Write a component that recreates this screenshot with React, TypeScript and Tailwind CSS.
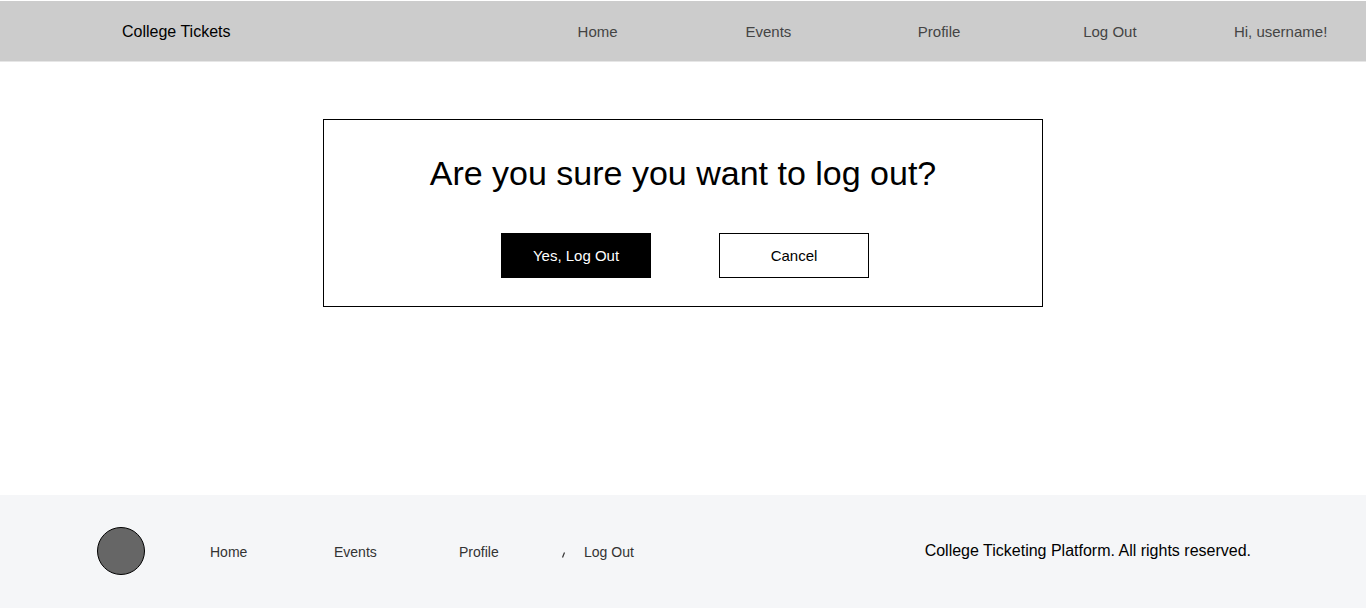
const headerLinks = ["Home", "Events", "Profile", "Log Out"];

function Header() {
  return (
    <header className="grid h-[61px] grid-cols-[3fr_5fr] items-center border-b border-[#e6e6e6] bg-[#cccccc] pt-0.5">
      <a href="#" className="pl-[122px] text-base text-black">
        College Tickets
      </a>
      <nav aria-label="Main" className="grid grid-cols-5 text-center text-[15px] leading-5 text-[#444444]">
        {headerLinks.map((label) => (
          <a key={label} href="#">
            {label}
          </a>
        ))}
        <span>Hi, username!</span>
      </nav>
    </header>
  );
}

function LogoutDialog() {
  return (
    <section
      aria-labelledby="logout-title"
      className="mx-auto w-full max-w-[720px] border border-black px-6 pt-8 pb-7"
    >
      <h1 id="logout-title" className="text-center text-[34px] leading-[42px] text-black">
        Are you sure you want to log out?
      </h1>
      <div className="mt-[39px] flex flex-wrap justify-center gap-x-[68px] gap-y-4 pl-1 text-[15px] leading-5">
        <button type="button" className="h-[45px] w-[150px] border border-black bg-black text-white">
          Yes, Log Out
        </button>
        <button type="button" className="h-[45px] w-[150px] border border-black bg-white text-black">
          Cancel
        </button>
      </div>
    </section>
  );
}

function Footer() {
  return (
    <footer className="flex h-[113px] items-center bg-[#f5f6f8] pr-[115px] pb-0.5 pl-[97px]">
      <div className="size-12 shrink-0 rounded-full border border-black bg-[#666666]" />
      <nav
        aria-label="Footer"
        className="ml-[65px] grid grid-cols-[124px_125px_125px_auto] pt-[3px] text-sm text-[#333333]"
      >
        <a href="#">Home</a>
        <a href="#">Events</a>
        <div className="flex items-center justify-between pr-4">
          <a href="#">Profile</a>
          <svg viewBox="0 0 8 20" className="h-5 w-2" fill="none" stroke="currentColor" aria-hidden="true">
            <path d="M2.5 15.5 L4.5 10.5" strokeWidth="1.2" />
          </svg>
        </div>
        <a href="#">Log Out</a>
      </nav>
      <p className="ml-auto text-base text-black">College Ticketing Platform. All rights reserved.</p>
    </footer>
  );
}

export default function App() {
  return (
    <div className="flex min-h-screen flex-col bg-white pt-px pr-px pb-px font-['Liberation_Sans',Arial,sans-serif]">
      <Header />
      <main className="grow pt-[57px] pb-8">
        <LogoutDialog />
      </main>
      <Footer />
    </div>
  );
}
